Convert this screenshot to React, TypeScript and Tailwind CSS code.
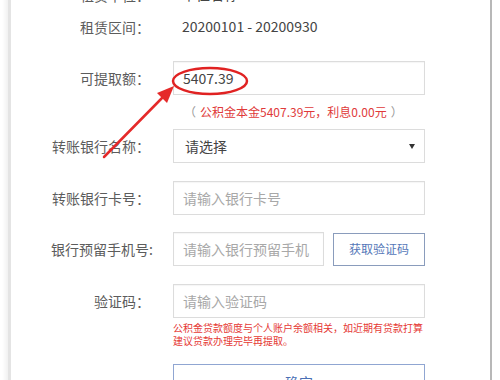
import React from "react";

const font = { fontFamily: '"Noto Sans CJK SC", "Noto Sans", sans-serif' };

function Label({ children }: { children: React.ReactNode }) {
  return (
    <div className="w-[139px] shrink-0 text-right text-[14px] text-[#5c5c5c] leading-none whitespace-nowrap">
      {children}
    </div>
  );
}

function InputBox({ text, placeholder, w = "w-[252px]" }: { text?: string; placeholder?: string; w?: string }) {
  return (
    <div className={`${w} h-[34px] ml-[23px] border border-[#dcdcdc] bg-white flex items-center pl-[9px] text-[14px] shadow-[inset_0_1px_1px_rgba(0,0,0,0.04)]`}>
      {text ? <span className="text-[#444]">{text}</span> : <span className="text-[#a8a8a8]">{placeholder}</span>}
    </div>
  );
}

export default function App() {
  return (
    <div className="w-[500px] h-[380px] overflow-hidden bg-white relative" style={font}>
      <div className="ml-[8px] w-[484px] h-[420px] border-l-[3px] border-[#e4e4e4] border-r-[2px] border-r-[#b8b8b8] shadow-[-3px_0_4px_rgba(0,0,0,0.06)] bg-white">
        <div className="-mt-[21px] flex flex-col">
          <div className="h-[31px] flex items-center">
            <Label>租赁单位：</Label>
            <div className="ml-[32px] text-[14px] text-[#444]">单位名称</div>
          </div>
          <div className="h-[31px] mt-[1px] flex items-center">
            <Label>租赁区间：</Label>
            <div className="ml-[32px] text-[14px] text-[#444]">20200101 - 20200930</div>
          </div>
          <div className="mt-[19px] flex items-center">
            <Label>可提取额：</Label>
            <InputBox text="5407.39" />
          </div>
          <div className="h-[34px] flex items-center pl-[173px] text-[12px] text-[#e03a3a]">
            <span className="text-[#999]">（</span>
            <span className="ml-[4px]">公积金本金5407.39元，利息0.00元</span>
            <span className="ml-[4px] text-[#999]">）</span>
          </div>
          <div className="flex items-center">
            <Label>转账银行名称：</Label>
            <div className="w-[252px] h-[34px] ml-[23px] border border-[#dcdcdc] bg-white flex items-center justify-between pl-[11px] pr-[9px] text-[14px] text-[#444]">
              <span>请选择</span>
              <svg width="6" height="6" viewBox="0 0 6 6">
                <polygon points="0,1 6,1 3,6" fill="#333" />
              </svg>
            </div>
          </div>
          <div className="mt-[18px] flex items-center">
            <Label>转账银行卡号：</Label>
            <InputBox placeholder="请输入银行卡号" />
          </div>
          <div className="mt-[17px] flex items-center">
            <Label>
              <span className="mr-[-3px]">银行预留手机号:</span>
            </Label>
            <InputBox placeholder="请输入银行预留手机" w="w-[151px]" />
            <div className="ml-[9px] w-[92px] h-[33px] border border-[#8a9cbc] bg-white flex items-center justify-center text-[12px] text-[#5577b8]">
              获取验证码
            </div>
          </div>
          <div className="mt-[18px] flex items-center">
            <Label>验证码：</Label>
            <InputBox placeholder="请输入验证码" />
          </div>
          <div className="mt-[3px] ml-[162px] w-[252px] text-[10px] leading-[13px] text-[#e53935]">
            公积金贷款额度与个人账户余额相关，如近期有贷款打算建议贷款办理完毕再提取。
          </div>
          <div className="mt-[17px] ml-[162px] w-[252px] h-[36px] border border-[#90a6d2] bg-white flex items-center justify-center text-[14px] text-[#4a6fb5]">
            确定
          </div>
        </div>
      </div>
      <svg className="absolute left-0 top-0 pointer-events-none" width="500" height="380">
        <ellipse cx="210" cy="81" rx="37" ry="13" fill="none" stroke="#e02222" strokeWidth="2.5" />
        <line x1="104" y1="157" x2="164" y2="96" stroke="#e52a2a" strokeWidth="2.5" strokeLinecap="round" />
        <polygon points="174,86 157,93 167,103" fill="#e52a2a" />
      </svg>
    </div>
  );
}
